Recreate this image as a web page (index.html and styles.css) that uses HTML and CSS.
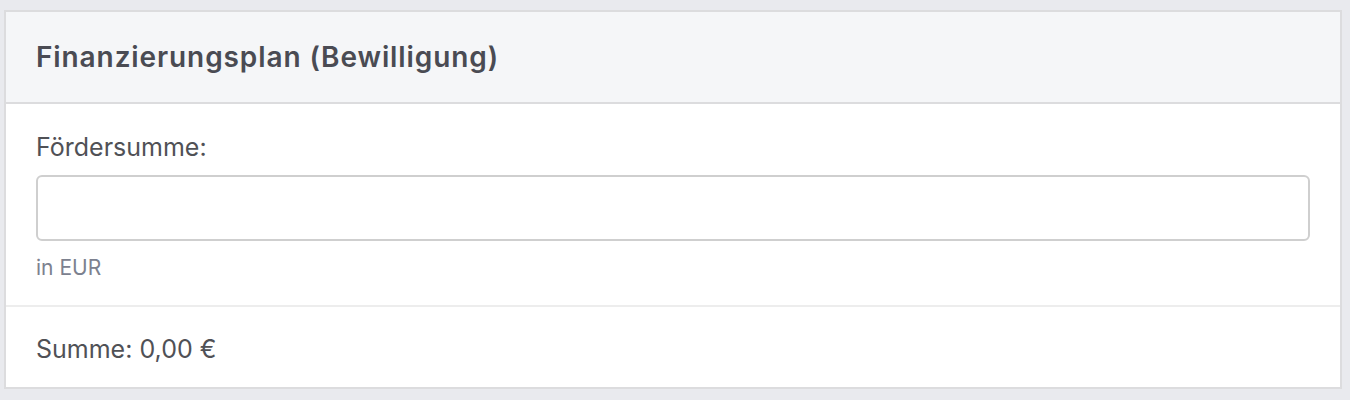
FILE: index.html
```html
<!DOCTYPE html>
<html lang="de">
<head>
<meta charset="utf-8">
<title>Finanzierungsplan</title>
<link rel="stylesheet" href="styles.css">
</head>
<body>
<div class="card">
  <div class="card-header">
    <h2 class="card-title">Finanzierungsplan (Bewilligung)</h2>
  </div>
  <div class="card-body">
    <label class="field-label" for="foerder">Fördersumme:</label>
    <input class="field-input" id="foerder" type="text">
    <div class="field-help">in EUR</div>
  </div>
  <div class="card-footer">Summe: 0,00 €</div>
</div>
</body>
</html>
```
FILE: styles.css
```css
html, body {
  margin: 0;
  padding: 0;
  background: #e9eaee;
  height: 100%;
}
body {
  padding: 10px 8px 0 4px;
  font-family: Inter, "Noto Sans", sans-serif;
  color: #4c4d52;
}
.card {
  background: #fff;
  border: 2px solid #dcdcde;
}
.card-header {
  background: #f5f6f8;
  border-bottom: 2px solid #dcdcde;
  height: 90px;
  display: flex;
  align-items: center;
  padding: 0 30px;
}
.card-title {
  margin: 0;
  font-size: 28px;
  font-weight: 600;
  letter-spacing: 0.9px;
  color: #4a4b53;
}
.card-body {
  padding: 28px 30px 24px;
  display: flex;
  flex-direction: column;
  border-bottom: 2px solid #ededed;
}
.field-label {
  font-size: 25px;
  color: #505156;
  line-height: 30px;
}
.field-input {
  margin-top: 13px;
  height: 66px;
  box-sizing: border-box;
  border: 2px solid #cfcfcf;
  border-radius: 6px;
  font: inherit;
}
.field-help {
  margin-top: 14px;
  font-size: 21px;
  color: #7c818f;
  line-height: 26px;
}
.card-footer {
  box-sizing: border-box;
  height: 80px;
  padding: 4px 30px 0;
  display: flex;
  align-items: center;
  font-size: 25px;
  color: #505156;
}
```
